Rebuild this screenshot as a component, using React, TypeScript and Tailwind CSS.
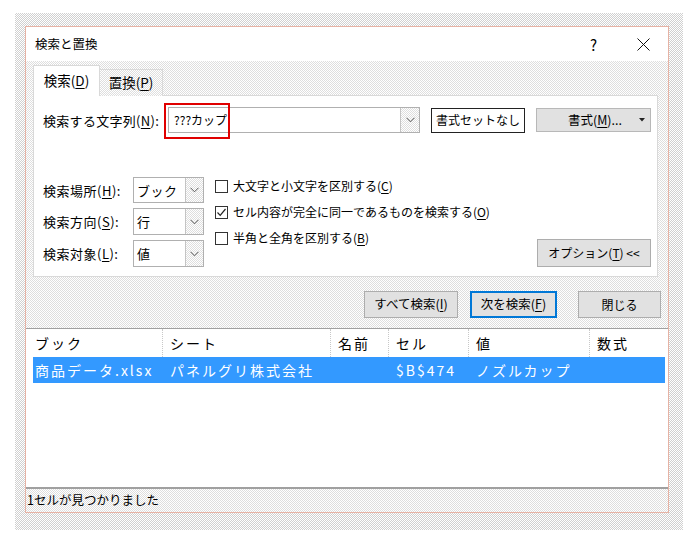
import React from 'react';

const dither = 'bg-[image:repeating-conic-gradient(#dedede_0%_25%,#ffffff_0%_50%)] bg-[length:2px_2px]';
const shadow = 'bg-[image:repeating-conic-gradient(#d0d0d0_0%_25%,#ffffff_0%_50%)] bg-[length:2px_2px]';

function U({ children }: { children: React.ReactNode }) {
  return <span className="underline underline-offset-[2px] decoration-1">{children}</span>;
}

function Chevron() {
  return (
    <svg width="9" height="6" viewBox="0 0 9 6">
      <path d="M0.5 0.8 L4.5 4.8 L8.5 0.8" fill="none" stroke="#555" strokeWidth="1" />
    </svg>
  );
}

function Select({ value, h }: { value: string; h: string }) {
  return (
    <div className={`flex w-[71px] ${h} border border-[#b0b0b0] bg-white`}>
      <div className="flex-1 flex items-center pl-[3px] text-[13px]">{value}</div>
      <div className={`w-[18px] flex items-center justify-center border-l border-[#c4c4c4] ${dither}`}>
        <Chevron />
      </div>
    </div>
  );
}

function Check({ checked, children }: { checked?: boolean; children: React.ReactNode }) {
  return (
    <div className="h-[26px] flex items-center gap-[5px]">
      <div className="w-[13px] h-[13px] border border-[#333] bg-white flex items-center justify-center">
        {checked && (
          <svg width="11" height="11" viewBox="0 0 11 11">
            <path d="M1.5 5.5 L4.2 8.3 L9.5 2" fill="none" stroke="#222" strokeWidth="1.2" />
          </svg>
        )}
      </div>
      <span>{children}</span>
    </div>
  );
}

function Btn({ w, h, children, primary }: { w: string; h: string; children: React.ReactNode; primary?: boolean }) {
  return (
    <div
      className={`${w} ${h} flex items-center justify-center bg-[#e1e1e1] ${
        primary ? 'border-2 border-[#0078d7]' : 'border border-[#adadad]'
      }`}
    >
      {children}
    </div>
  );
}

const cols = ['w-[129px]', 'w-[168px]', 'w-[58px]', 'w-[80px]', 'w-[121px]', 'flex-1'];
const headers = ['ブック', 'シート', '名前', 'セル', '値', '数式'];
const row = ['商品データ.xlsx', 'パネルグリ株式会社', '', '$B$474', 'ノズルカップ', ''];

export default function App() {
  return (
    <div className="w-[698px] h-[541px] bg-white pt-[13px] pl-[15px] font-['Noto_Sans_CJK_JP',sans-serif] text-[12px] text-black leading-none">
      <div className={`w-[668px] h-[517px] pt-[13px] pl-[10px] ${shadow}`}>
        <div className="w-[644px] h-[487px] border border-[#e6b2a4] flex flex-col bg-white">
          {/* title bar */}
          <div className="h-[34px] flex items-center pl-[9px] pr-[18px] bg-white">
            <span className="text-[12.5px]">検索と置換</span>
            <span className="ml-auto mr-[40px] text-[15px]">?</span>
            <svg width="13" height="13" viewBox="0 0 13 13">
              <path d="M0.5 0.5 L12.5 12.5 M12.5 0.5 L0.5 12.5" stroke="#111" strokeWidth="1" />
            </svg>
          </div>

          <div className={`flex-1 flex flex-col pt-[4px] ${dither}`}>
            {/* tabs */}
            <div className="relative z-10 -mb-px flex items-end h-[31px] pl-[7px] text-[13.5px]">
              <div className="w-[67px] h-[31px] bg-white border-t border-l border-r border-[#d9d9d9] flex items-center justify-center">
                検索(<U>D</U>)
              </div>
              <div className={`w-[63px] h-[27px] border-t border-r border-[#d9d9d9] flex items-center justify-center ${dither}`}>
                置換(<U>P</U>)
              </div>
            </div>

            {/* panel */}
            <div className="ml-[7px] w-[625px] h-[182px] bg-white border border-[#d9d9d9] flex flex-col pl-[9px] pt-[11px]">
              <div className="flex items-center h-[26px]">
                <div className="w-[125px] text-[13px] tracking-[0.3px]">
                  検索する文字列(<U>N</U>):
                </div>
                <div className="relative flex w-[252px] h-[26px] border border-[#b0b0b0] bg-white">
                  <div className="flex-1 flex items-center pl-[5px]">???カップ</div>
                  <div className={`w-[19px] flex items-center justify-center border-l border-[#c4c4c4] ${dither}`}>
                    <Chevron />
                  </div>
                  <div className="absolute left-[-5px] top-[-5px] w-[66px] h-[36px] border-2 border-[#e00000]" />
                </div>
                <div className="ml-[11px] w-[94px] h-[25px] border border-[#222] bg-white flex items-center justify-center">
                  書式セットなし
                </div>
                <div className="ml-[11px] w-[115px] h-[24px] border border-[#b8b8b8] bg-[#e1e1e1] flex items-center pr-[5px]">
                  <span className="flex-1 text-center pl-[14px] text-[12.5px]">
                    書式(<U>M</U>)...
                  </span>
                  <svg width="6" height="4" viewBox="0 0 6 4">
                    <path d="M0 0 L6 0 L3 3.5 Z" fill="#222" />
                  </svg>
                </div>
              </div>

              <div className="mt-[40px] flex h-[94px]">
                <div className="flex flex-col gap-[5px] pt-[4px] text-[13px] tracking-[0.5px]">
                  <div className="flex items-center h-[26px]">
                    <div className="w-[90px]">
                      検索場所(<U>H</U>):
                    </div>
                    <Select value="ブック" h="h-[26px]" />
                  </div>
                  <div className="flex items-center h-[27px]">
                    <div className="w-[90px]">
                      検索方向(<U>S</U>):
                    </div>
                    <Select value="行" h="h-[27px]" />
                  </div>
                  <div className="flex items-center h-[27px]">
                    <div className="w-[90px]">
                      検索対象(<U>L</U>):
                    </div>
                    <Select value="値" h="h-[27px]" />
                  </div>
                </div>
                <div className="ml-[11px] flex flex-col">
                  <Check>
                    大文字と小文字を区別する(<U>C</U>)
                  </Check>
                  <Check checked>
                    セル内容が完全に同一であるものを検索する(<U>O</U>)
                  </Check>
                  <Check>
                    半角と全角を区別する(<U>B</U>)
                  </Check>
                </div>
                <div className="ml-auto mr-[6px] self-end">
                  <Btn w="w-[114px]" h="h-[28px]">
                    オプション(<U>T</U>) &lt;&lt;
                  </Btn>
                </div>
              </div>
            </div>

            {/* action buttons */}
            <div className="mt-[14px] h-[27px] flex justify-end pr-[7px]">
              <Btn w="w-[94px]" h="h-[27px]">
                <span className="text-[12.5px]">
                  すべて検索(<U>I</U>)
                </span>
              </Btn>
              <div className="ml-[12px]">
                <Btn w="w-[87px]" h="h-[27px]" primary>
                  <span className="text-[12.5px]">
                    次を検索(<U>F</U>)
                  </span>
                </Btn>
              </div>
              <div className="ml-[21px]">
                <Btn w="w-[83px]" h="h-[27px]">
                  閉じる
                </Btn>
              </div>
            </div>

            {/* results list */}
            <div className="mt-[10px] h-[161px] bg-white border-t border-b-2 border-[#a0a0a0] flex flex-col text-[14px] tracking-[2px]">
              <div className="h-[28px] flex pl-[7px] mr-[3px]">
                {headers.map((t, i) => (
                  <div
                    key={i}
                    className={`${cols[i]} h-full flex items-center ${
                      i === 0 ? 'pl-[2px]' : 'pl-[7px] border-l border-dotted border-[#c8c8c8]'
                    }`}
                  >
                    {t}
                  </div>
                ))}
              </div>
              <div className="h-[26px] ml-[7px] mr-[3px] bg-[#3399ff] text-white flex">
                {row.map((t, i) => (
                  <div key={i} className={`${cols[i]} h-full flex items-center ${i === 0 ? 'pl-[2px]' : 'pl-[8px]'}`}>
                    {t}
                  </div>
                ))}
              </div>
            </div>

            {/* status bar */}
            <div className="flex-1 flex items-center pl-[1px] text-[12.5px]">1セルが見つかりました</div>
          </div>
        </div>
      </div>
    </div>
  );
}
